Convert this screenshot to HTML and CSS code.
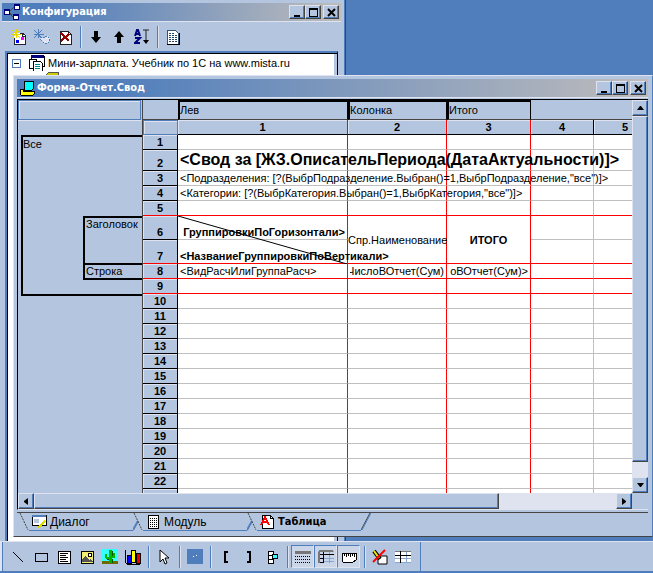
FILE: index.html
```html
<!DOCTYPE html>
<html lang="ru">
<head>
  <meta charset="UTF-8">
  <meta name="viewport" content="width=device-width, initial-scale=1.0">
  <title>Форма-Отчет.Свод</title>
  <link rel="stylesheet" href="styles.css">
</head>
<body>
  <main class="desktop">
    <!-- Окно конфигурации -->
    <section class="window config">
      <header class="title-bar">
        <svg width="16" height="16" shape-rendering="crispEdges">
          <path d="M5 8L10 3M5 8L9 13" stroke="#444" fill="none"/>
          <path d="M0 5h6v6H0zM10 0h6v6h-6zM9 10h6v6H9z" fill="#00007a"/>
          <path d="M1 7h4v3H1zM11 2h4v3h-4zM10 12h4v3h-4z" fill="#fff"/>
        </svg>
        <h1>Конфигурация</h1>
        <div class="title-buttons">
          <button type="button" aria-label="Свернуть"><svg width="9" height="9"><path d="M1 7h6v2H1z"/></svg></button>
          <button type="button" aria-label="Развернуть"><svg width="9" height="9"><path d="M0 0h9v9H0zM1 2v6h7V2z" fill-rule="evenodd"/></svg></button>
          <button type="button" aria-label="Закрыть" class="close"><svg width="9" height="9"><path d="M1 1L8 8M8 1L1 8" stroke="#000" stroke-width="2"/></svg></button>
        </div>
      </header>
      <div class="toolbar">
        <button type="button" aria-label="Новый"><svg width="16" height="16" shape-rendering="crispEdges"><path d="M3 4h8l3 3v8H3z" fill="#fff"/><path d="M3 9v6h11V6l-3-2H9M11 4v3h3" stroke="#223" fill="none"/><path d="M5 0v9M0 5h10M1 1l8 8M9 1L1 9" stroke="#e6d800"/><path d="M10 8h3v3h-3z" fill="#f0f"/><path d="M5 11h3v3H5z" fill="#00f"/></svg></button>
        <button type="button" aria-label="Редактировать"><svg width="18" height="16" shape-rendering="crispEdges"><path d="M5 0v9M1 5h10M1 1l8 8M9 1L1 9" stroke="#507ebc"/><path d="M7 8l4 1 3-2 3 3-2 4-3 1-4-4z" fill="#dfe3ef" stroke="#507ebc" stroke-dasharray="2 1"/></svg></button>
        <button type="button" aria-label="Удалить"><svg width="16" height="16" shape-rendering="crispEdges"><path d="M3 2h8l3 3v10H3z" fill="#fff" stroke="#222"/><path d="M11 2v3h3" fill="none" stroke="#222"/><path d="M4 4l8 8M12 5l-8 7" stroke="#980000" stroke-width="2"/></svg></button>
        <span class="divider"></span>
        <button type="button" aria-label="Вниз"><svg width="16" height="16"><path d="M6 2h4v6h3l-5 6-5-6h3z"/></svg></button>
        <button type="button" aria-label="Вверх"><svg width="16" height="16"><path d="M6 14h4V8h3L8 2 3 8h3z"/></svg></button>
        <button type="button" aria-label="Сортировка"><svg width="16" height="16"><path d="M1 7l2-6h1l2 6M2 5h3M1 9h5l-5 5h5" fill="none" stroke="#00007a" stroke-width="2"/><path d="M9 1h6M12 1v12" stroke="#222" stroke-width="1"/><path d="M9 11h6l-3 4z"/></svg></button>
        <span class="divider"></span>
        <button type="button" aria-label="Описание"><svg width="16" height="16" shape-rendering="crispEdges"><path d="M2 1h8l3 3v11H2z" fill="#fff" stroke="#357"/><path d="M2 15h12V4" fill="none" stroke="#000"/><path d="M4 4h6M4 6h8M4 8h8M4 10h8M4 12h8" stroke="#246" stroke-dasharray="2 1"/></svg></button>
      </div>
      <div class="tree">
        <div class="tree-row">
          <span class="expander"></span>
          <svg width="20" height="16" shape-rendering="crispEdges"><path d="M4 1h13v10H4z" fill="#fff" stroke="#000"/><path d="M4 0h13v3H4z" fill="#00007a"/><path d="M2 4h7v9H2z" fill="#fff" stroke="#000"/><path d="M6 6h7l2 2v8H6z" fill="#fff" stroke="#000"/><path d="M8 9h5M8 11h5M8 13h5" stroke="#088"/></svg>
          <span>Мини-зарплата. Учебник по 1С на www.mista.ru</span>
        </div>
        <div class="tree-row child">
          <svg width="16" height="14" shape-rendering="crispEdges"><path d="M1 3l3-3h9v12H1z" fill="#cc0" stroke="#555"/></svg>
          <span>Константы</span>
        </div>
      </div>
    </section>

    <!-- Окно формы отчета -->
    <section class="window form">
      <header class="title-bar">
        <svg width="16" height="16" shape-rendering="crispEdges"><path d="M5 2l1-1h8v8l-1 1H5z" fill="#0ff" stroke="#000"/><path d="M1 9h3v2h11v3l-1 1H2L1 14z" fill="#ff0" stroke="#000"/></svg>
        <h1>Форма-Отчет.Свод</h1>
        <div class="title-buttons">
          <button type="button" aria-label="Свернуть"><svg width="9" height="9"><path d="M1 7h6v2H1z"/></svg></button>
          <button type="button" aria-label="Развернуть"><svg width="9" height="9"><path d="M0 0h9v9H0zM1 2v6h7V2z" fill-rule="evenodd"/></svg></button>
          <button type="button" aria-label="Закрыть" class="close"><svg width="9" height="9"><path d="M1 1L8 8M8 1L1 8" stroke="#000" stroke-width="2"/></svg></button>
        </div>
      </header>
      <div class="sheet">
        <div class="sections">
          <div class="sections-corner"></div>
          <div class="section-all">
            <span>Все</span>
            <div class="section">Заголовок</div>
            <div class="section">Строка</div>
          </div>
        </div>
        <div class="grid-area">
          <table>
            <colgroup><col class="c-num"><col class="c1"><col class="c2"><col class="c3"><col class="c4"><col class="c5"></colgroup>
            <thead>
              <tr class="names"><th></th><th class="named">Лев</th><th class="named">Колонка</th><th class="named">Итого</th><th></th><th></th></tr>
              <tr class="numbers"><th class="corner"></th><th class="cut">1</th><th class="cut">2</th><th class="cut">3</th><th>4</th><th>5</th></tr>
            </thead>
            <tbody>
              <tr><th>1</th><td></td><td></td><td></td><td></td><td></td></tr>
              <tr class="tall"><th>2</th><td>&lt;Свод за [ЖЗ.ОписательПериода(ДатаАктуальности)]&gt;</td><td></td><td></td><td></td><td></td></tr>
              <tr><th>3</th><td>&lt;Подразделения: [?(ВыбрПодразделение.Выбран()=1,ВыбрПодразделение,"все")]&gt;</td><td></td><td></td><td></td><td></td></tr>
              <tr><th>4</th><td>&lt;Категории: [?(ВыбрКатегория.Выбран()=1,ВыбрКатегория,"все")]&gt;</td><td></td><td></td><td></td><td></td></tr>
              <tr class="red"><th>5</th><td></td><td></td><td></td><td></td><td></td></tr>
              <tr class="double"><th>6</th><td class="bold diagonal"><svg class="slash" viewBox="0 0 169 48" preserveAspectRatio="none"><path d="M0 0L169 48" stroke="#000"/></svg><span class="clip">ГруппировкиПоГоризонтали&gt;</span></td><td rowspan="2" class="merged">Спр.Наименование</td><td rowspan="2" class="merged bold">ИТОГО</td><td></td><td></td></tr>
              <tr class="double red"><th>7</th><td class="bold">&lt;НазваниеГруппировкиПоВертикали&gt;</td><td></td><td></td></tr>
              <tr class="red"><th>8</th><td>&lt;ВидРасчИлиГруппаРасч&gt;</td><td><span class="clip">ЧислоВОтчет(Сум)</span></td><td><span class="clip">оВОтчет(Сум)&gt;</span></td><td></td><td></td></tr>
              <tr class="red"><th>9</th><td></td><td></td><td></td><td></td><td></td></tr>
              <tr><th>10</th><td></td><td></td><td></td><td></td><td></td></tr>
              <tr><th>11</th><td></td><td></td><td></td><td></td><td></td></tr>
              <tr><th>12</th><td></td><td></td><td></td><td></td><td></td></tr>
              <tr><th>13</th><td></td><td></td><td></td><td></td><td></td></tr>
              <tr><th>14</th><td></td><td></td><td></td><td></td><td></td></tr>
              <tr><th>15</th><td></td><td></td><td></td><td></td><td></td></tr>
              <tr><th>16</th><td></td><td></td><td></td><td></td><td></td></tr>
              <tr><th>17</th><td></td><td></td><td></td><td></td><td></td></tr>
              <tr><th>18</th><td></td><td></td><td></td><td></td><td></td></tr>
              <tr><th>19</th><td></td><td></td><td></td><td></td><td></td></tr>
              <tr><th>20</th><td></td><td></td><td></td><td></td><td></td></tr>
              <tr><th>21</th><td></td><td></td><td></td><td></td><td></td></tr>
              <tr><th>22</th><td></td><td></td><td></td><td></td><td></td></tr>
              <tr><th></th><td></td><td></td><td></td><td></td><td></td></tr>
            </tbody>
          </table>
        </div>
        <div class="scroll vertical">
          <button type="button" aria-label="Вверх"><svg width="7" height="4"><path d="M3 0h1l3 4H0z"/></svg></button>
          <div class="thumb"></div>
          <button type="button" aria-label="Вниз"><svg width="7" height="4"><path d="M0 0h7L4 4H3z"/></svg></button>
        </div>
        <div class="scroll horizontal">
          <button type="button" aria-label="Влево"><svg width="4" height="7"><path d="M4 0v7L0 4V3z"/></svg></button>
          <div class="thumb"></div>
          <button type="button" aria-label="Вправо"><svg width="4" height="7"><path d="M0 0v7l4-3V3z"/></svg></button>
        </div>
      </div>
      <nav class="tabs">
        <svg class="slant" width="10" height="18"><path d="M1 0l8 17" stroke="#444" stroke-dasharray="2 1"/></svg>
        <a href="#dialog" class="tab"><svg width="16" height="15" shape-rendering="crispEdges"><path d="M1 1h14v10H1z" fill="#fff" stroke="#000"/><path d="M1 1h14v2H1z" fill="#507ebc"/><path d="M3 5h5v4H3z" fill="#b4c6df"/><path d="M7 14l7-7" stroke="#dd0" stroke-width="2"/></svg>Диалог</a>
        <svg class="slant" width="10" height="18"><path d="M0 17L5 8" stroke="#507ebc" stroke-width="2"/><path d="M1 0l8 17" stroke="#444" stroke-dasharray="2 1"/></svg>
        <a href="#module" class="tab"><svg width="16" height="15" shape-rendering="crispEdges"><path d="M3 1h10v13H3z" fill="#fff" stroke="#000"/><path d="M5 4h7M5 6h7M5 8h7M5 10h7M5 12h7" stroke="#000" stroke-dasharray="1 1"/></svg>Модуль</a>
        <svg class="slant" width="10" height="18"><path d="M0 17L5 8" stroke="#507ebc" stroke-width="2"/><path d="M1 0l8 17" stroke="#444" stroke-dasharray="2 1"/></svg>
        <a href="#table" class="tab active"><svg width="16" height="15" shape-rendering="crispEdges"><path d="M3 1h8l3 3v10H3z" fill="#fff" stroke="#000"/><path d="M11 1v3h3" fill="none" stroke="#000"/><path d="M2 11L6 3l4 8M4 8h5" fill="none" stroke="#f00" stroke-width="2"/></svg>Таблица</a>
        <svg class="slant" width="10" height="18"><path d="M0 17L9 0" stroke="#444"/><path d="M1 17L10 0" stroke="#507ebc"/></svg>
      </nav>
    </section>
  </main>

  <!-- Панель рисования -->
  <footer class="tools">
    <button type="button" aria-label="Линия"><svg width="16" height="16" shape-rendering="crispEdges"><path d="M3 3l10 10" stroke="#000"/></svg></button>
    <button type="button" aria-label="Прямоугольник"><svg width="16" height="16" shape-rendering="crispEdges"><path d="M2 4h12v8H2z" fill="none" stroke="#000"/></svg></button>
    <button type="button" aria-label="Текст"><svg width="16" height="16" shape-rendering="crispEdges"><path d="M2 2h12v12H2z" fill="#fff" stroke="#000"/><path d="M4 4h8M4 6h6M4 8h8M4 10h6M4 12h8" stroke="#000"/></svg></button>
    <button type="button" aria-label="Картинка"><svg width="16" height="16" shape-rendering="crispEdges"><path d="M2 2h12v12H2z" fill="#f2ec70" stroke="#000"/><path d="M3 13v-3l3-3 4 4 2-1 2 3z" fill="#555"/><path d="M9 4h3v3H9z" fill="#fff" stroke="#000"/></svg></button>
    <button type="button" aria-label="Объект"><svg width="16" height="16" shape-rendering="crispEdges"><path d="M0 0h16v12H0z" fill="#3ff"/><path d="M0 12h16v3H0z" fill="#6b6b00"/><path d="M7 1h3v13H7zM3 5h2v3h3v2H4L3 9zM11 4h2v4l-1 1H9V7h2z" fill="#00b400"/><path d="M10 2v5M10 10v4M5 10h2" stroke="#050" fill="none"/></svg></button>
    <button type="button" aria-label="Диаграмма"><svg width="18" height="16" shape-rendering="crispEdges"><path d="M1 1v12l2 2h13" fill="none" stroke="#000"/><path d="M3 6h4v8H3z" fill="#00f" stroke="#000"/><path d="M7 1h4v12H7z" fill="#ff0" stroke="#000"/><path d="M12 4h4v10h-4z" fill="#e00" stroke="#000"/></svg></button>
    <span class="divider"></span>
    <button type="button" aria-label="Выбор"><svg width="16" height="16"><path d="M4 1v12l3-3 2 5 2-1-2-5h4z" fill="#fff" stroke="#000"/></svg></button>
    <span class="divider"></span>
    <button type="button" aria-label="Цвет"><svg width="16" height="16" shape-rendering="crispEdges"><path d="M0 0h16v15H0z" fill="#507ebc"/><path d="M6 7h1v1H6zM9 6h1v1H9z" fill="#fff"/></svg></button>
    <span class="divider"></span>
    <button type="button" aria-label="Начало секции"><svg width="16" height="16"><path d="M10 3H7v10h3" fill="none" stroke="#000" stroke-width="2"/></svg></button>
    <button type="button" aria-label="Конец секции"><svg width="16" height="16"><path d="M6 3h3v10H6" fill="none" stroke="#000" stroke-width="2"/></svg></button>
    <button type="button" aria-label="Группы"><svg width="16" height="16" shape-rendering="crispEdges"><path d="M4 2h5v4H4zM4 6h5v4H4zM4 10h5v4H4z" fill="#fff" stroke="#000"/><path d="M8 5h5v4H8z" fill="#3ff" stroke="#000"/></svg></button>
    <span class="divider"></span>
    <button type="button" class="pressed" aria-label="Имена"><svg width="16" height="16" shape-rendering="crispEdges"><path d="M0 2h16v3H0z" fill="#777"/><path d="M0 7h16M0 10h16M0 13h16" stroke="#000" stroke-dasharray="1 1"/></svg></button>
    <button type="button" class="pressed" aria-label="Сетка"><svg width="16" height="16" shape-rendering="crispEdges"><path d="M0 2h16M6 9h10M6 12h10M11 2v12" stroke="#89a6d2"/><path d="M0 5h16M0 9h6M0 13h6M5 2v12" stroke="#000"/><path d="M1 2h14M1 3v11" stroke="#777" stroke-width="2"/></svg></button>
    <button type="button" class="pressed" aria-label="Линейка"><svg width="16" height="16" shape-rendering="crispEdges"><path d="M1 4h14v7l-3 2H2L1 11z" fill="#fff" stroke="#000"/><path d="M3 4v3M5 4v4M7 4v3M9 4v4M11 4v3M13 4v4" stroke="#000"/></svg></button>
    <span class="divider"></span>
    <button type="button" aria-label="Без редактирования"><svg width="16" height="16"><path d="M6 7h9v8H6z" fill="#fff" stroke="#000"/><path d="M2 2l6 8" stroke="#000" stroke-width="4"/><path d="M2 2l5 7" stroke="#ee0" stroke-width="2"/><path d="M1 13L13 1" stroke="#f00" stroke-width="2"/></svg></button>
    <button type="button" aria-label="Таблица"><svg width="16" height="16" shape-rendering="crispEdges"><path d="M0 2h16v12H0z" fill="#fff"/><path d="M0 9h16M0 13h16M11 2v12" stroke="#89a6d2"/><path d="M0 2h16" stroke="#777"/><path d="M0 6h16M5 2v12" stroke="#000"/></svg></button>
    <span class="toolbar-end"></span>
  </footer>
</body>
</html>
```

FILE: styles.css
```css
* {
  box-sizing: border-box;
}

body {
  margin: 0;
  height: 100vh;
  display: flex;
  flex-direction: column;
  overflow: hidden;
  background-color: #507ebc;
  color: #000;
  font-family: "Liberation Sans", Arial, sans-serif;
  font-size: 11px;
  line-height: 14px;
}

button {
  padding: 0;
  border: none;
  background: none;
  display: flex;
  align-items: center;
  justify-content: center;
}

svg {
  flex: none;
  fill: #000;
}

/* ------ОКНА------- */
.desktop {
  flex: 1;
  position: relative;
  overflow: hidden;
}

.window {
  position: absolute;
  display: flex;
  flex-direction: column;
  background-color: #b4c6df;
}

.config {
  left: 0;
  top: 0;
  bottom: 0;
  width: 346px;
  padding: 3px 4px 0 2px;
  border-right: 1px solid #444;
  box-shadow: inset -1px 0 #507ebc;
}

.form {
  left: 13px;
  right: 0;
  top: 75px;
  bottom: 4px;
  padding: 3px 4px 0 3px;
  border: 1px solid #dfe3ef;
  border-right-color: #507ebc;
  border-bottom-color: #444;
}

.title-bar {
  display: flex;
  align-items: center;
  height: 19px;
  padding: 0 2px;
  background: linear-gradient(to right, #507ebc 15%, #bebcbc);
  border-bottom: 1px solid #dfe3ef;
}

.form .title-bar {
  margin-bottom: 1px;
}

.title-bar h1 {
  flex: 1;
  margin: 0 2px;
  color: #fff;
  font-family: "DejaVu Sans Condensed", "DejaVu Sans", sans-serif;
  font-size: 11px;
  font-weight: bold;
}

.title-buttons {
  display: flex;
}

.title-buttons button,
.scroll button,
.thumb {
  background-color: #b4c6df;
  border: 1px solid #dfe3ef;
  border-right-color: #444;
  border-bottom-color: #444;
  box-shadow: inset -1px -1px #507ebc;
}

.title-buttons button {
  width: 16px;
  height: 14px;
}

.title-buttons .close {
  margin-left: 2px;
}

/* ------ПАНЕЛИ КНОПОК------- */
.toolbar,
.tools {
  display: flex;
  align-items: center;
}

.toolbar {
  height: 29px;
  padding-left: 5px;
}

.toolbar button,
.tools button {
  width: 23px;
  height: 23px;
}

.divider {
  width: 8px;
  height: 22px;
  background: linear-gradient(#507ebc, #507ebc) 4px 0 / 1px 100% no-repeat, linear-gradient(#dfe3ef, #dfe3ef) 5px 0 / 1px 100% no-repeat;
}

.tools {
  height: 32px;
  padding: 0 0 0 6px;
  background-color: #b4c6df;
  border-top: 1px solid #dfe3ef;
  border-bottom: 2px solid #507ebc;
  box-shadow: inset 2px 0 #dfe3ef, inset 3px 0 #507ebc;
}

.tools .pressed {
  background-color: #cad5e7;
  border: 1px solid #507ebc;
  border-right-color: #dfe3ef;
  border-bottom-color: #dfe3ef;
}

.toolbar-end {
  width: 7px;
  height: 100%;
  border-right: 1px solid #507ebc;
}

/* ------ДЕРЕВО------- */
.tree {
  flex: 1;
  margin: 0 3px 0 3px;
  padding: 2px 3px 0 2px;
  background-color: #fff;
  border: 2px solid #507ebc;
  border-right: 1px solid #000;
  border-bottom: none;
  box-shadow: inset 1px 1px #000, inset -3px 0 #b4c6df;
}

.tree-row {
  display: flex;
  align-items: center;
  height: 16px;
  padding-left: 3px;
}

.tree-row span:last-child {
  margin-left: 1px;
}

.tree-row.child {
  padding-left: 36px;
}

.expander {
  width: 9px;
  height: 9px;
  margin-right: 6px;
  border: 1px solid #507ebc;
  background: linear-gradient(#000, #000) center / 5px 1px no-repeat;
}

/* ------ЛИСТ ТАБЛИЦЫ------- */
.sheet {
  flex: 1;
  min-height: 0;
  display: grid;
  grid-template-columns: 125px 1fr 16px;
  grid-template-rows: 1fr 16px;
  border-top: 1px solid #000;
  border-left: 1px solid #000;
  border-bottom: 1px solid #dfe3ef;
}

.sections {
  border-right: 1px solid #444;
}

.sections-corner {
  height: 20px;
  margin-right: 1px;
  margin-bottom: 15px;
  border: 1px solid #507ebc;
  box-shadow: 0 1px #dfe3ef, inset 1px 1px #dfe3ef;
}

.section-all {
  display: grid;
  grid-template-rows: 79px 49px 15px 14px;
  margin-left: 3px;
  border: 2px solid #000;
  border-right: none;
}

.section {
  margin-left: 60px;
  padding-left: 1px;
  border: 2px solid #000;
  border-right: none;
  line-height: 13px;
}

.section + .section {
  border-top: none;
}

.grid-area {
  overflow: hidden;
  background-color: #fff;
}

table {
  table-layout: fixed;
  width: 514px;
  min-width: 100%;
  border-spacing: 0;
}

.c-num {
  width: 35px;
}

.c1 {
  width: 170px;
}

.c2 {
  width: 99px;
}

.c3 {
  width: 84px;
}

.c4,
.c5 {
  width: 63px;
}

tr {
  height: 15px;
}

.tall {
  height: 21px;
}

.double {
  height: 24px;
}

th,
td {
  padding: 0;
  white-space: nowrap;
  border-right: 1px solid #c0c0c0;
  border-bottom: 1px solid #c0c0c0;
}

td {
  padding: 0 2px;
  vertical-align: bottom;
}

th {
  background-color: #b4c6df;
  border-color: #000;
  box-shadow: inset 1px 1px #dfe3ef;
  vertical-align: bottom;
}

td:nth-child(2),
td:nth-child(3),
td:nth-child(4) {
  border-right-color: #f00;
}

/* в седьмой строке две ячейки объединены с верхними */
.double.red td:nth-child(3),
.double.red td:nth-child(4) {
  border-right-color: #c0c0c0;
}

.red th,
.red td,
td.merged {
  border-bottom-color: #f00;
}

.names {
  height: 20px;
}

.names th {
  border-right: none;
  border-bottom-color: #444;
  box-shadow: none;
  font-weight: normal;
  text-align: left;
  vertical-align: top;
}

.names .named {
  border-top: 2px solid #000;
  border-left: 2px solid #000;
  border-right: 1px solid #000;
  line-height: 16px;
}

.numbers .corner {
  border: 1px solid #507ebc;
}

.numbers .cut {
  border-right-color: #f00;
}

.tall td {
  font-size: 16px;
  font-weight: bold;
  line-height: 20px;
}

.bold {
  font-weight: bold;
}

.diagonal {
  position: relative;
}

.slash {
  position: absolute;
  left: 0;
  top: 0;
  width: 169px;
  height: 48px;
}

td.merged {
  padding: 0;
  text-align: center;
  vertical-align: middle;
}

.clip {
  display: flex;
  justify-content: flex-end;
  overflow: hidden;
}

/* ------ПОЛОСЫ ПРОКРУТКИ------- */
.scroll {
  display: flex;
  background-color: #dfe3ef;
}

.scroll button {
  width: 16px;
  height: 16px;
}

.vertical {
  flex-direction: column;
}

.vertical .thumb {
  flex: 1;
  margin-bottom: 15px;
}

.horizontal {
  grid-column: 1 / 3;
}

.horizontal .thumb {
  flex: 1;
  margin-right: 19%;
}

/* ------ЗАКЛАДКИ------- */
.tabs {
  display: flex;
  height: 24px;
  margin-top: 2px;
  padding-left: 2px;
  border-top: 1px solid #444;
}

.tab {
  display: flex;
  align-items: center;
  gap: 3px;
  width: 104px;
  height: 18px;
  padding-left: 2px;
  color: #000;
  font-size: 12px;
  text-decoration: none;
  border-bottom: 1px solid #507ebc;
}

.tab.active {
  font-family: "DejaVu Sans Condensed", "DejaVu Sans", sans-serif;
  font-size: 11px;
  font-weight: bold;
}
```
